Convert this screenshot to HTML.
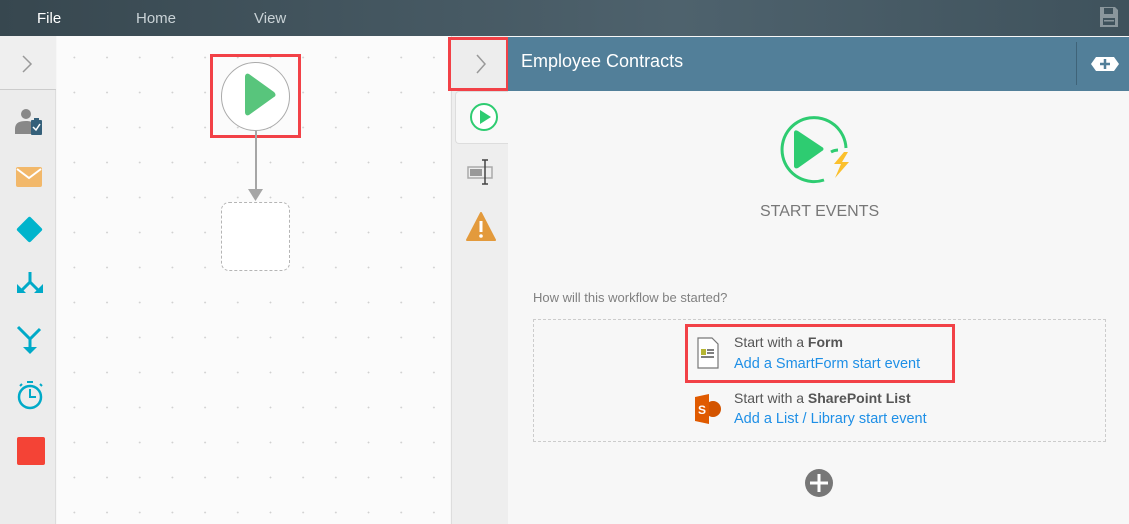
<!DOCTYPE html>
<html><head><meta charset="utf-8"><style>
*{margin:0;padding:0;box-sizing:border-box}
body{width:1129px;height:524px;overflow:hidden;background:#f7f7f7;font-family:"Liberation Sans",sans-serif;position:relative}
.abs{position:absolute}
#top{left:0;top:0;width:1129px;height:36px;background:linear-gradient(90deg,#37474f,#4e626d 60%,#3f525c);}
#top span{position:absolute;top:10px;font-size:15px;color:#c9d2d6}
#left{left:0;top:36px;width:56px;height:488px;background:#ececec;border-right:1px solid #ddd}
#canvas{left:57px;top:36px;width:393px;height:488px;background-color:#fbfbfb;background-image:radial-gradient(circle,#d0d0d0 0.7px,transparent 1.1px);background-size:32.7px 35px;background-position:1px 4px}
#strip{left:451px;top:36px;width:57px;height:488px;background:#eeeeee;border-left:1px solid #ddd}
#hdr{left:508px;top:37px;width:621px;height:54px;background:#527f99}
a{color:#1e8fe6;text-decoration:none}
</style></head><body>
<div id="top" class="abs"><span style="left:37px;color:#fff">File</span><span style="left:136px">Home</span><span style="left:254px">View</span>
<svg class="abs" style="left:1099px;top:6px" width="20" height="22" viewBox="0 0 20 22"><path d="M1 1h15l3 3v17H1z" fill="#8a969c"/><rect x="5" y="2" width="9" height="6" fill="#3f525c"/><rect x="4" y="12" width="12" height="7" fill="#3f525c"/><rect x="5" y="14" width="10" height="1.5" fill="#8a969c"/></svg></div>
<div id="left" class="abs">
<div class="abs" style="left:0;top:0;width:56px;height:54px;border-bottom:1px solid #ccc;background:#efefef"></div>
<svg class="abs" style="left:21px;top:18px" width="12" height="20"><path d="M2 2l8 8-8 8" stroke="#999" stroke-width="1.5" fill="none"/></svg>
<svg class="abs" style="left:15px;top:71px" width="30" height="32" viewBox="0 0 30 32"><circle cx="11" cy="7" r="5" fill="#888"/><path d="M0 22c0-6 4-8 11-8s8 3 8 3v10H0z" fill="#888"/><rect x="16" y="13" width="11" height="15" rx="1" fill="#35607a"/><rect x="19" y="11" width="5" height="4" fill="#35607a"/><path d="M18 20l3 3 4-6" stroke="#fff" stroke-width="1.5" fill="none"/></svg>
<div class="abs" style="left:16px;top:131px;width:26px;height:20px;background:#f2b86a;border-radius:2px"></div>
<svg class="abs" style="left:16px;top:131px" width="26" height="20"><path d="M1 2l12 9 12-9" stroke="#fff" stroke-width="2" fill="none"/></svg>
<div class="abs" style="left:20px;top:184px;width:19px;height:19px;background:#00b4cc;transform:rotate(45deg);border-radius:2px"></div>
<svg class="abs" style="left:15px;top:234px" width="30" height="32" viewBox="0 0 30 32"><path d="M15 2v10l-9 9M15 12l9 9" stroke="#00aac8" stroke-width="3" fill="none"/><path d="M2 14v9h9zM28 14v9h-9z" fill="#00aac8"/></svg>
<svg class="abs" style="left:15px;top:289px" width="30" height="34" viewBox="0 0 30 34"><path d="M3 2l12 12 10-10M15 14v10" stroke="#00aac8" stroke-width="3" fill="none"/><path d="M8 22h14l-7 7z" fill="#00aac8"/></svg>
<svg class="abs" style="left:16px;top:344px" width="30" height="32" viewBox="0 0 30 32"><circle cx="14" cy="17" r="11" stroke="#00aac8" stroke-width="2.5" fill="none"/><path d="M11 2h6M14 9v8h6M4 6l2-2M24 4l2 2" stroke="#00aac8" stroke-width="2" fill="none"/></svg>
<div class="abs" style="left:17px;top:401px;width:28px;height:28px;background:#f44336;border-radius:2px"></div>
</div>
<div id="canvas" class="abs"></div>
<div class="abs" style="left:210px;top:54px;width:91px;height:84px;border:3px solid #f24147"></div>
<div class="abs" style="left:221px;top:62px;width:69px;height:69px;border-radius:50%;border:1.5px solid #aaa;background:#fff"></div>
<svg class="abs" style="left:225px;top:66px" width="60" height="60"><path d="M20 11c0-3 2-4 4-3l25 18c2 2 2 4 0 5L24 49c-2 1-4 0-4-3z" fill="#58c57c"/></svg>
<div class="abs" style="left:254.5px;top:131px;width:2px;height:60px;background:#a6a6a6"></div>
<svg class="abs" style="left:248px;top:189px" width="15" height="12"><path d="M0 0h15L7.5 12z" fill="#a6a6a6"/></svg>
<div class="abs" style="left:221px;top:202px;width:69px;height:69px;border-radius:8px;border:1.5px dashed #b5b5b5;background:#fff"></div>
<div id="strip" class="abs"></div>
<div class="abs" style="left:448px;top:37px;width:61px;height:54px;border:3px solid #f24147;background:#ededed"></div>
<svg class="abs" style="left:475px;top:53px" width="12" height="22"><path d="M2 2l8 9-8 9" stroke="#999" stroke-width="1.5" fill="none"/></svg>
<div class="abs" style="left:455px;top:91px;width:53px;height:53px;background:#f7f7f7;border:1px solid #ddd;border-right:none;border-radius:4px 0 0 4px"></div>
<svg class="abs" style="left:468px;top:102px" width="32" height="32"><circle cx="16" cy="15" r="13" stroke="#2ecc71" stroke-width="2" fill="#fff"/><path d="M12 8l11 7-11 7z" fill="#2ecc71"/></svg>
<svg class="abs" style="left:466px;top:158px" width="30" height="30" viewBox="0 0 30 30"><rect x="2" y="9" width="24" height="11" fill="none" stroke="#aaa" stroke-width="1.5"/><rect x="4" y="11" width="12" height="7" fill="#999"/><path d="M16 2h6M19 2v24M16 26h6" stroke="#444" stroke-width="1.5"/></svg>
<svg class="abs" style="left:466px;top:212px" width="30" height="30"><path d="M15 1L29 28H1z" fill="#e39a3c" stroke="#e39a3c" stroke-linejoin="round" stroke-width="2"/><rect x="13.5" y="9" width="3" height="11" fill="#fff"/><circle cx="15" cy="24" r="1.8" fill="#fff"/></svg>
<div id="hdr" class="abs"><span class="abs" style="left:13px;top:14px;font-size:18px;color:#fff">Employee Contracts</span>
<div class="abs" style="left:568px;top:5px;width:1px;height:43px;background:#3f6378"></div>
<svg class="abs" style="left:582px;top:19px" width="30" height="16"><path d="M6 1h18l5 7-5 7H6L1 8z" fill="#fff"/><path d="M15 3v10M10 8h10" stroke="#527f99" stroke-width="2.5"/></svg></div>
<svg class="abs" style="left:776px;top:108px" width="84" height="84" viewBox="0 0 84 84"><path d="M70 40A32 32 0 1 0 48 72" stroke="#2ecc71" stroke-width="3" fill="none"/><path d="M55 44A16 16 0 0 1 62 42" stroke="#2ecc71" stroke-width="3" fill="none"/><path d="M18 25c0-3 2-3 4-2l24 16c2 1 2 3 0 4L22 60c-2 1-4 0-4-2z" fill="#2ecc71"/><path d="M68 44l-10 12h7l-6 14 14-16h-7l6-10z" fill="#fbc02d"/></svg>
<div class="abs" style="left:760px;top:203px;font-size:16px;color:#777">START EVENTS</div>
<div class="abs" style="left:533px;top:290px;font-size:13px;color:#808080">How will this workflow be started?</div>
<div class="abs" style="left:533px;top:319px;width:573px;height:123px;border:1px dashed #ccc"></div>
<div class="abs" style="left:685px;top:324px;width:270px;height:59px;border:3px solid #f24147"></div>
<svg class="abs" style="left:696px;top:337px" width="24" height="32" viewBox="0 0 24 32"><path d="M2 1h14l6 6v24H2z" fill="#fff" stroke="#777" stroke-width="1.2"/><rect x="5" y="12" width="5" height="6" fill="#b5b533"/><path d="M11 13h7M11 16h7M5 20h13" stroke="#555" stroke-width="1.5"/></svg>
<div class="abs" style="left:734px;top:334px;font-size:14px;color:#555">Start with a <b>Form</b></div>
<a class="abs" style="left:734px;top:356px;font-size:14.5px">Add a SmartForm start event</a>
<svg class="abs" style="left:693px;top:393px" width="30" height="32" viewBox="0 0 30 32"><circle cx="20" cy="16" r="8" fill="#d35400"/><path d="M2 4l14-3v30L2 28z" fill="#e05a00"/><text x="5" y="21" font-size="12" font-weight="bold" fill="#fff" font-family="Liberation Sans">S</text></svg>
<div class="abs" style="left:734px;top:390px;font-size:14px;color:#555">Start with a <b>SharePoint List</b></div>
<a class="abs" style="left:734px;top:411px;font-size:14.5px">Add a List / Library start event</a>
<svg class="abs" style="left:803px;top:467px" width="32" height="32"><circle cx="16" cy="16" r="14" fill="#777"/><path d="M16 7v18M7 16h18" stroke="#fff" stroke-width="3"/></svg>
</body></html>
